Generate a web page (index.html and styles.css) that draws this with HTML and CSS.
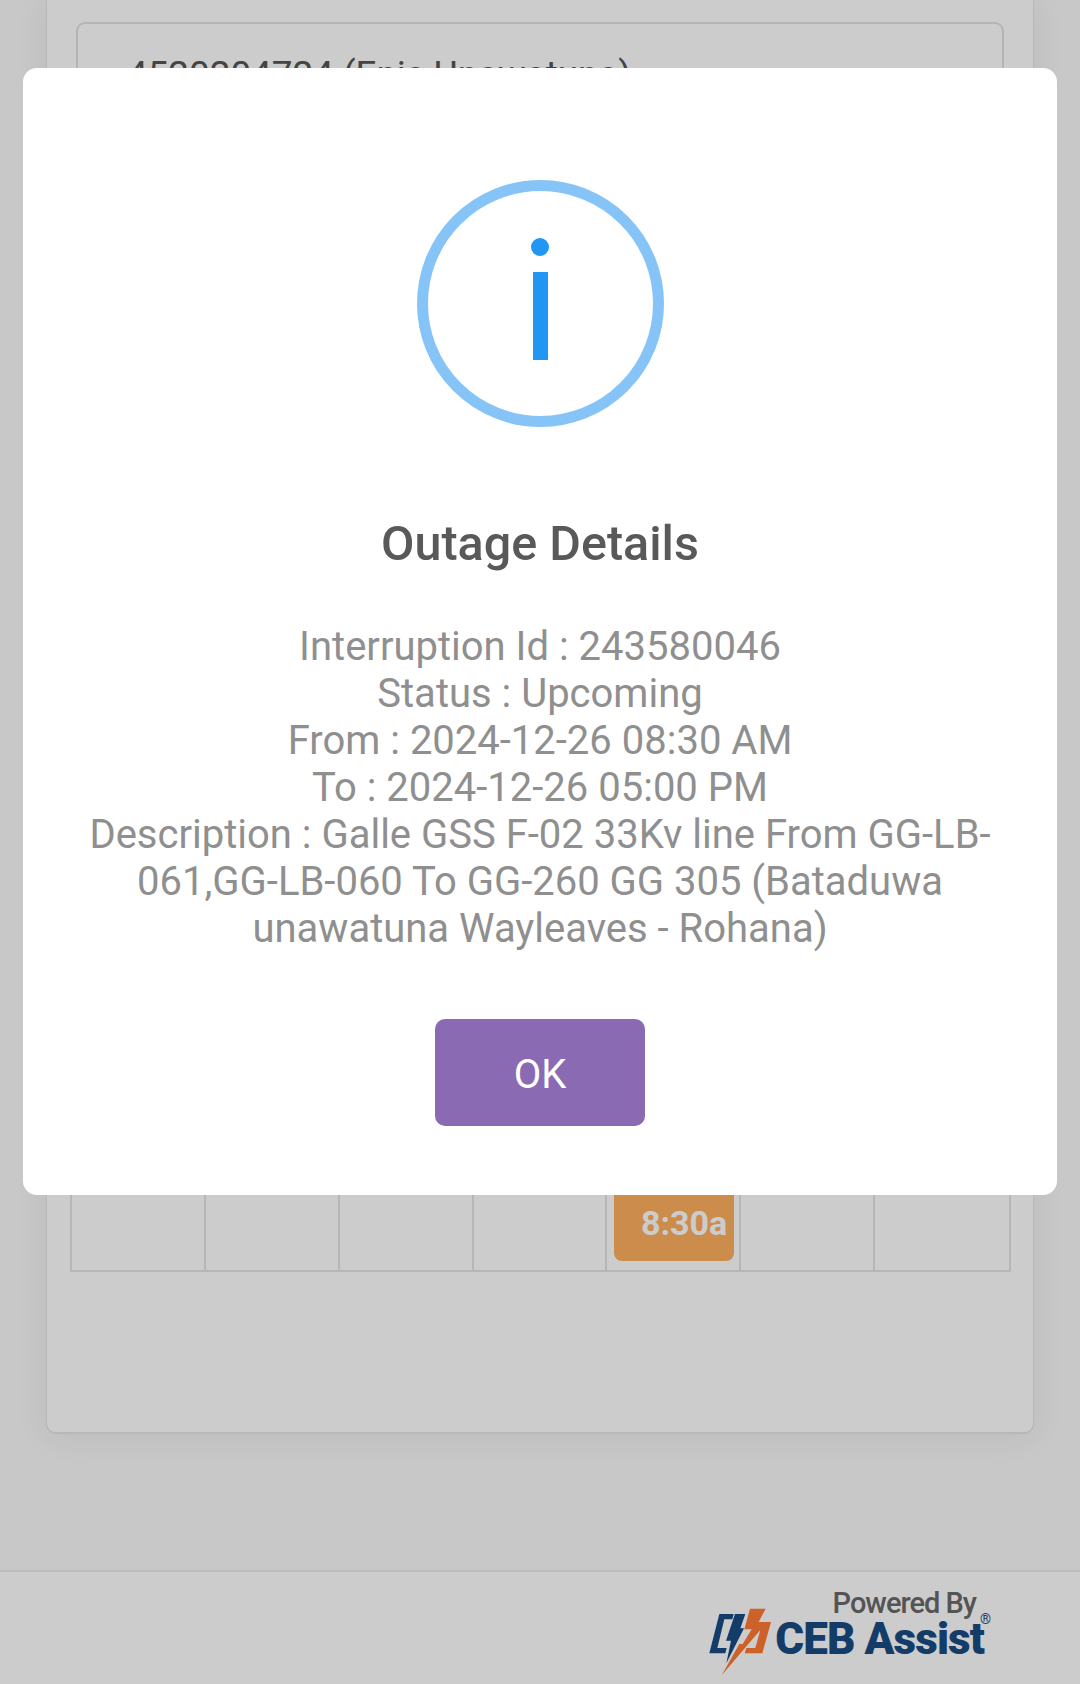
FILE: index.html
```html
<!DOCTYPE html>
<html lang="en">
<head>
<meta charset="utf-8">
<title>Outage Details</title>
<link rel="stylesheet" href="styles.css">
</head>
<body>
<main class="page">
  <section class="card">
    <div class="select">
      <span class="select-text">4520204724 (Enis Unawatuna)</span>
      <svg class="chev" width="24" height="14" viewBox="0 0 24 14"><path d="M2 2l10 10L22 2" fill="none" stroke="#666" stroke-width="2"/></svg>
    </div>
    <div class="calendar">
      <div class="cell"></div><div class="cell"></div><div class="cell"></div><div class="cell"></div>
      <div class="cell"><div class="event">8:30a</div></div>
      <div class="cell"></div><div class="cell"></div>
    </div>
  </section>
  <footer class="footer">
    <div class="brand">
      <svg class="brand-mark" width="80" height="80" viewBox="0 0 240 240">
        <path fill="#194b82" d="M28 160L58 42H101L97 58H73L52 144H80L76 160Z"/>
        <path fill="#194b82" d="M105 42H136L121 85H132L79 190L93 122H78Z"/>
        <path fill="#ff7a34" d="M150 26H197L176 66H213L187 160H134L139 144H166L181 90L65 226L118 132H128L155 88H133Z"/>
      </svg>
      <div class="brand-text">
        <div class="powered">Powered By</div>
        <div class="assist">CEB Assist<span class="reg">®</span></div>
      </div>
    </div>
  </footer>
</main>

<div class="overlay"></div>

<div class="modal" role="dialog">
  <div class="info-icon"><span class="info-dot"></span><span class="info-bar"></span></div>
  <h2 class="modal-title">Outage Details</h2>
  <div class="modal-body">
    Interruption Id : 243580046<br>
    Status : Upcoming<br>
    From : 2024-12-26 08:30 AM<br>
    To : 2024-12-26 05:00 PM<br>
    Description : Galle GSS F-02 33Kv line From GG-LB-061,GG-LB-060 To GG-260 GG 305 (Bataduwa unawatuna Wayleaves - Rohana)
  </div>
  <button class="ok" type="button">OK</button>
</div>
</body>
</html>
```
FILE: styles.css
```css
* { box-sizing: border-box; }
html, body { margin: 0; padding: 0; }
body {
  width: 1080px;
  height: 1684px;
  overflow: hidden;
  position: relative;
  font-family: Roboto, "Liberation Sans", sans-serif;
  background: #fafafa;
}
.page {
  height: 1684px;
  display: flex;
  flex-direction: column;
}
.card {
  height: 1434px;
  margin: 0 46px;
  background: #ffffff;
  border: 1px solid #e6e6e6;
  border-top: 0;
  border-bottom-width: 2px;
  border-radius: 0 0 10px 10px;
  padding: 22px 22px 0 23px;
  box-shadow: 0 2px 34px rgba(0, 0, 0, .07);
  flex: none;
  display: flex;
  flex-direction: column;
}
.select {
  height: 110px;
  margin: 0 7px 0 6px;
  border: 2px solid #e2e2e2;
  border-radius: 9px;
  padding: 30px 0 0 49px;
  display: flex;
  justify-content: space-between;
  color: #555;
  font-size: 36.8px;
  line-height: 42px;
  flex: none;
}
.chev { margin: 16px 12px 0 0; }
.calendar {
  margin-top: auto;
  margin-bottom: 160px;
  height: 400px;
  display: grid;
  grid-template-columns: repeat(7, 1fr);
  border: 2px solid #e4e4e4;
  border-top: 0;
}
.cell {
  border-right: 2px solid #e4e4e4;
  padding: 0 5px 9px 7px;
  display: flex;
  align-items: flex-end;
}
.cell:last-child { border-right: 0; }
.event {
  width: 100%;
  height: 200px;
  background: #ffaf60;
  border-radius: 0 0 8px 8px;
  color: #fff;
  font-weight: 700;
  font-size: 34px;
  line-height: 38px;
  padding: 0 7px 19px 0;
  display: flex;
  align-items: flex-end;
  justify-content: flex-end;
}
.footer {
  flex: none;
  margin-top: 136px;
  height: 114px;
  background: #fff;
  border-top: 2px solid #ececec;
  display: flex;
  justify-content: flex-end;
  padding-right: 96px;
}
.brand {
  display: flex;
  align-items: flex-start;
  padding-top: 28px;
}
.brand-mark { margin-right: -5px; flex: none; }
.brand-text { position: relative; margin-top: -13px; }
.powered {
  text-align: right;
  font-size: 29px;
  line-height: 32px;
  font-weight: 500;
  letter-spacing: -1px;
  color: #6a6a6a;
  padding-right: 8px;
}
.assist {
  font-size: 44px;
  line-height: 40px;
  font-weight: 900;
  color: #194b82;
  white-space: nowrap;
  letter-spacing: -0.9px;
}
.reg {
  position: absolute;
  right: -7px;
  top: 25px;
  font-size: 14px;
  line-height: 14px;
  letter-spacing: 0;
  font-weight: 400;
}
.overlay {
  position: absolute;
  inset: 0;
  background: rgba(0, 0, 0, .2);
}
.modal {
  position: absolute;
  left: 23px;
  top: 68px;
  width: 1034px;
  height: 1127px;
  background: #fff;
  border-radius: 14px;
  display: flex;
  flex-direction: column;
  align-items: center;
  padding-top: 112px;
}
.info-icon {
  width: 247px;
  height: 247px;
  border: 11px solid #86c4f8;
  border-radius: 50%;
  display: flex;
  flex-direction: column;
  align-items: center;
  flex: none;
  padding-top: 47px;
}
.info-dot {
  width: 18px;
  height: 18px;
  border-radius: 50%;
  background: #2196f3;
  flex: none;
}
.info-bar {
  width: 15px;
  height: 88px;
  margin-top: 16px;
  background: #2196f3;
  flex: none;
}
.modal-title {
  margin: 90px 0 0;
  font-size: 48.5px;
  line-height: 54px;
  font-weight: 500;
  color: #595959;
}
.modal-body {
  margin-top: 52px;
  width: 920px;
  text-align: center;
  font-size: 40px;
  line-height: 47px;
  color: #8f8f8f;
}
.ok {
  margin-top: 67px;
  width: 210px;
  height: 107px;
  border: 0;
  border-radius: 10px;
  padding: 3px 0 0;
  background: #8a6bb3;
  color: #fff;
  font-family: inherit;
  font-size: 40px;
  flex: none;
}
```
